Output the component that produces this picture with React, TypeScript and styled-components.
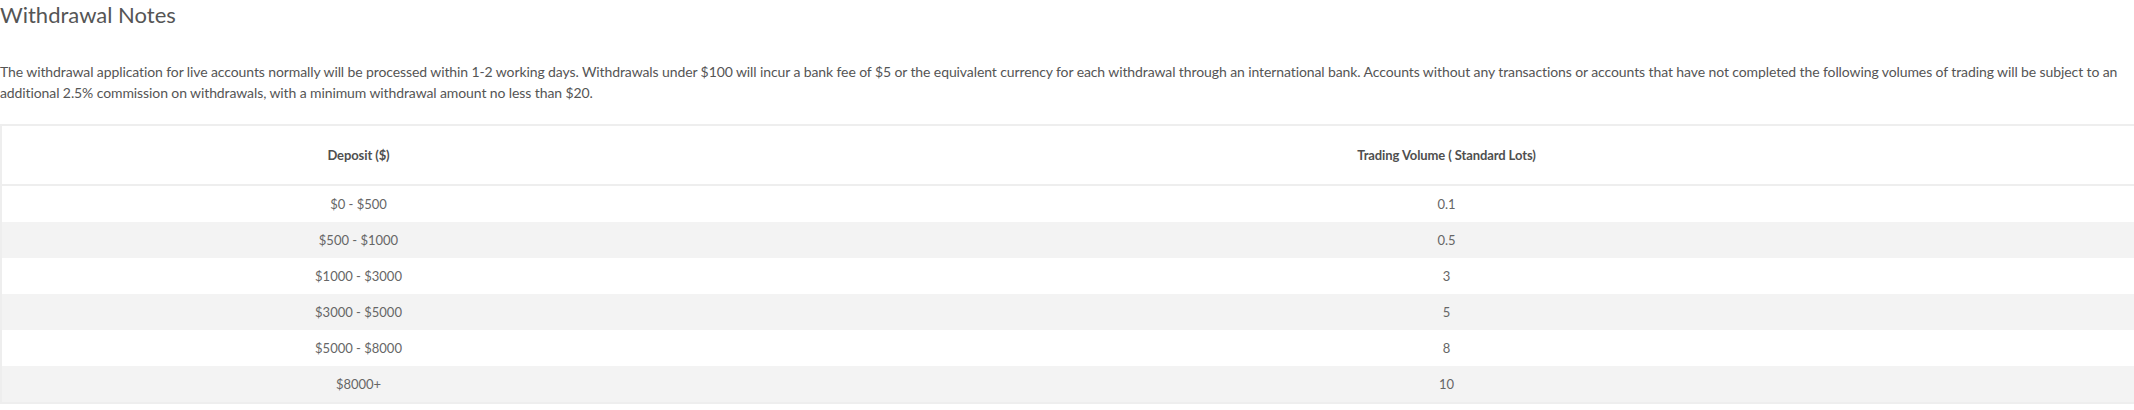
import React from "react";
import styled, { createGlobalStyle } from "styled-components";

const Global = createGlobalStyle`
  html, body { margin: 0; padding: 0; background: #fff; overflow: hidden; }
  body { font-family: Lato, "Open Sans", sans-serif; color: #555; }
`;

const Page = styled.div`
  width: 2134px;
`;

const Title = styled.h2`
  margin: 0;
  font-size: 22px;
  font-weight: 400;
  line-height: 30px;
  color: #555;
`;

const Notes = styled.p`
  margin: 31px 0 0;
  width: 2134px;
  font-size: 14px;
  line-height: 21px;
  letter-spacing: -0.1px;
  color: #555;
`;

const Table = styled.table`
  margin-top: 21px;
  width: 2180px;
  border-collapse: collapse;
  table-layout: fixed;
  border: 2px solid #eeeeee;
  font-size: 13px;
`;

const HeadCell = styled.th`
  height: 58px;
  padding: 0;
  font-weight: 700;
  color: #4f4f4f;
  text-align: center;
  letter-spacing: -0.1px;
  border-bottom: 2px solid #eeeeee;
`;

const Row = styled.tr<{ $striped: boolean }>`
  background: ${(p) => (p.$striped ? "#f3f3f3" : "#fff")};
`;

const Cell = styled.td`
  height: 36px;
  padding: 0;
  text-align: center;
  color: #666;
`;

const rows: [string, string][] = [
  ["$0 - $500", "0.1"],
  ["$500 - $1000", "0.5"],
  ["$1000 - $3000", "3"],
  ["$3000 - $5000", "5"],
  ["$5000 - $8000", "8"],
  ["$8000+", "10"],
];

export default function App() {
  return (
    <Page>
      <Global />
      <Title>Withdrawal Notes</Title>
      <Notes>
        The withdrawal application for live accounts normally will be processed within 1-2 working days. Withdrawals under $100 will incur a bank fee of $5 or the equivalent currency for each withdrawal through an international bank. Accounts without any transactions or accounts that have not completed the following volumes of trading will be subject to an additional 2.5% commission on withdrawals, with a minimum withdrawal amount no less than $20.
      </Notes>
      <Table>
        <colgroup>
          <col style={{ width: 714 }} />
          <col />
        </colgroup>
        <thead>
          <tr>
            <HeadCell>Deposit ($)</HeadCell>
            <HeadCell>Trading Volume ( Standard Lots)</HeadCell>
          </tr>
        </thead>
        <tbody>
          {rows.map(([d, v], i) => (
            <Row key={d} $striped={i % 2 === 1}>
              <Cell>{d}</Cell>
              <Cell>{v}</Cell>
            </Row>
          ))}
        </tbody>
      </Table>
    </Page>
  );
}
